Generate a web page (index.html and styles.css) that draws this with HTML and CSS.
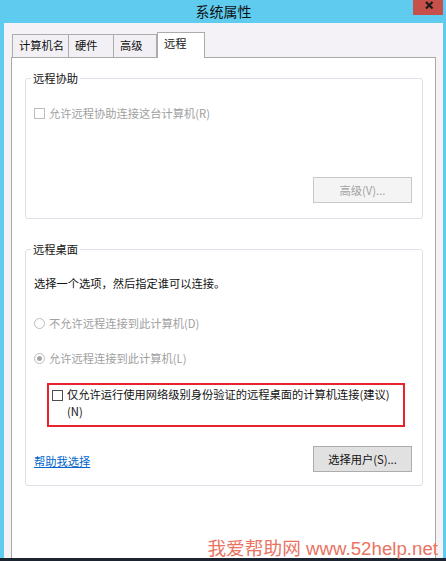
FILE: index.html
```html
<!DOCTYPE html>
<html lang="zh-CN">
<head>
<meta charset="utf-8">
<title>系统属性</title>
<link rel="stylesheet" href="styles.css">
</head>
<body>
<div class="window">
  <div class="titlebar">
    <span class="title">系统属性</span>
    <div class="close">
      <svg width="30" height="15" viewBox="0 0 30 15"><path d="M13 2 L19.5 8.5 M19.5 2 L13 8.5" stroke="#1b1b1b" stroke-width="2.2" fill="none"/></svg>
    </div>
  </div>
  <div class="client">
    <div class="tabs">
      <div class="tab t1">计算机名</div>
      <div class="tab t2">硬件</div>
      <div class="tab t3">高级</div>
      <div class="tab active">远程</div>
    </div>
    <div class="panel">
      <fieldset class="group g1">
        <legend>远程协助</legend>
        <div class="check disabled"><span class="box"></span><span>允许远程协助连接这台计算机(R)</span></div>
        <div class="btn-row"><button class="btn disabled">高级(V)...</button></div>
      </fieldset>
      <fieldset class="group g2">
        <legend>远程桌面</legend>
        <div class="intro">选择一个选项，然后指定谁可以连接。</div>
        <div class="radio r1 disabled"><span class="circle"></span><span>不允许远程连接到此计算机(D)</span></div>
        <div class="radio r2 disabled"><span class="circle on"></span><span>允许远程连接到此计算机(L)</span></div>
        <div class="redbox">
          <span class="box dark"></span>
          <span class="nla">仅允许运行使用网络级别身份验证的远程桌面的计算机连接(建议)<br>(N)</span>
        </div>
        <div class="bottom-row">
          <a class="link">帮助我选择</a>
          <button class="btn">选择用户(S)...</button>
        </div>
      </fieldset>
    </div>
  </div>
  <div class="watermark">我爱帮助网 www.52help.net</div>
</div>
</body>
</html>
```
FILE: styles.css
```css
* { box-sizing: border-box; }
html, body { margin: 0; padding: 0; }
body {
  width: 446px;
  height: 561px;
  overflow: hidden;
  font-family: "Noto Sans CJK SC", "Microsoft YaHei", sans-serif;
  font-size: 11.25px;
  color: #1a1a1a;
  background: #5fcbef;
}
.window {
  position: relative;
  width: 446px;
  height: 561px;
  background: #5fcbef;
  border-bottom: 3px solid #1b2330;
  display: flex;
  flex-direction: column;
  padding: 0 3px 0 4px;
}
.titlebar {
  height: 23px;
  position: relative;
  display: flex;
  align-items: center;
  justify-content: center;
}
.title {
  font-size: 14px;
  line-height: 20px;
  color: #111;
  margin-top: -2px;
}
.close {
  position: absolute;
  right: 0;
  top: 0;
  width: 30px;
  height: 15px;
  background: #c8504a;
}
.close svg { display: block; }
.client {
  flex: 1;
  background: #f4f2f7;
  padding: 9px 7px 0 7px;
  display: flex;
  flex-direction: column;
  overflow: hidden;
}
.tabs {
  display: flex;
  align-items: flex-end;
  height: 25px;
  padding-left: 1px;
  flex: none;
}
.tab {
  height: 23px;
  line-height: 21px;
  border: 1px solid #acacac;
  border-bottom: none;
  padding-left: 6px;
  background: #f2f0f4;
  white-space: nowrap;
  color: #111;
}
.t1 { width: 57px; margin-right: -1px; }
.t2 { width: 46px; margin-right: -1px; }
.t3 { width: 44px; }
.tab.active {
  width: 48px;
  height: 26px;
  line-height: 20px;
  background: #fff;
  margin-bottom: -1px;
  position: relative;
  z-index: 1;
}
.panel {
  flex: 1;
  background: #fff;
  border: 1px solid #a9a9a9;
  border-bottom: none;
  padding: 12px 12px 0 13px;
}
.group {
  margin: 0;
  border: 1px solid #dde1ea;
  border-radius: 3px;
  padding: 0 10px 0 8px;
  min-width: 0;
}
.group legend {
  padding: 0 2px;
  margin-left: -3px;
  line-height: 16px;
  color: #111;
}
.g1 { padding-top: 19px; padding-bottom: 15px; }
.g2 { margin-top: 22px; padding-top: 18px; padding-bottom: 13px; }
.check, .radio {
  display: flex;
  align-items: center;
  line-height: 16px;
  height: 16px;
  gap: 4px;
}
.disabled { color: #a0a0a0; }
.box {
  width: 11px;
  height: 11px;
  border: 1px solid #bdbdbd;
  background: #fff;
  flex: none;
}
.box.dark { border-color: #4d4d4d; }
.circle {
  width: 11px;
  height: 11px;
  border: 1px solid #bdbdbd;
  border-radius: 50%;
  background: #fff;
  flex: none;
  display: flex;
  align-items: center;
  justify-content: center;
}
.circle.on::after {
  content: "";
  width: 5px;
  height: 5px;
  border-radius: 50%;
  background: #a5a5a5;
}
.btn-row {
  margin-top: 56px;
  display: flex;
  justify-content: flex-end;
}
.btn {
  width: 99px;
  height: 26px;
  font-family: inherit;
  font-size: 11.25px;
  padding: 0;
  background: #e1e1e1;
  border: 1px solid #adadad;
  color: #111;
}
.btn.disabled {
  background: #f4f4f4;
  border-color: #c9c9c9;
  color: #a3a3a3;
}
.intro { line-height: 16px; color: #111; }
.r1 { margin-top: 24px; }
.r2 { margin-top: 19px; }
.redbox {
  margin-top: 17px;
  margin-left: 13px;
  width: 358px;
  height: 44px;
  border: 2px solid #e8232b;
  padding: 1px 0 0 3px;
  display: flex;
  align-items: flex-start;
  gap: 4px;
}
.redbox .box { margin-top: 4px; }
.nla { line-height: 17px; color: #111; white-space: nowrap; }
.bottom-row {
  margin-top: 19px;
  display: flex;
  justify-content: space-between;
  align-items: center;
}
.link {
  color: #0066cc;
  text-decoration: underline;
  line-height: 16px;
  margin-top: 4px;
}
.watermark {
  position: absolute;
  right: 8px;
  top: 539px;
  line-height: 20px;
  font-size: 18.7px;
  font-family: "Liberation Sans", "Noto Sans CJK SC", sans-serif;
  color: #ea7362;
  white-space: nowrap;
}
```
